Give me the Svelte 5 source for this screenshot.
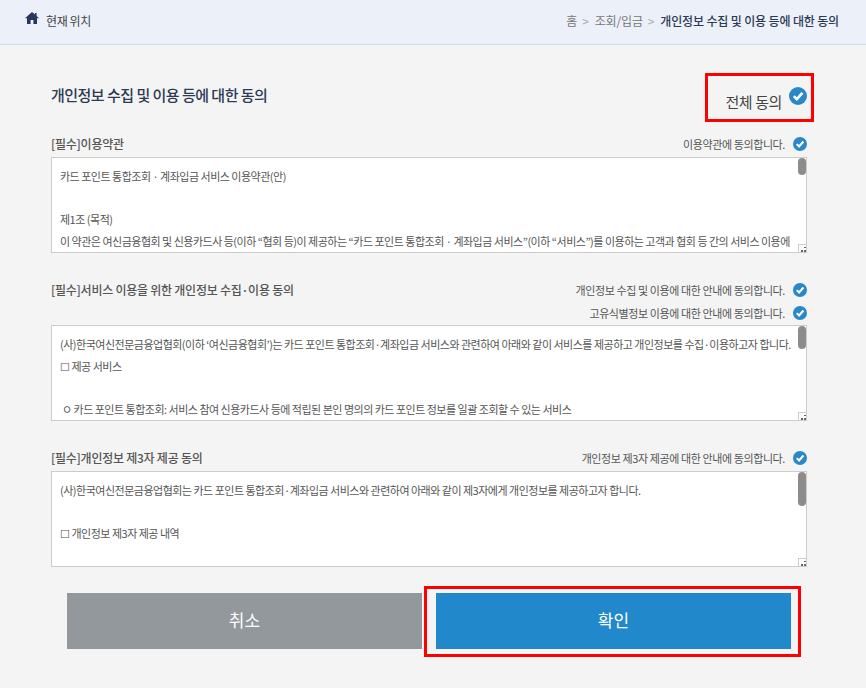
<script>
  const sections = [
    {
      title: '[필수]이용약관',
      checks: ['이용약관에 동의합니다.'],
      lines: [
        '카드 포인트 통합조회 · 계좌입금 서비스 이용약관(안)',
        '',
        '제1조 (목적)',
        '이 약관은 여신금융협회 및 신용카드사 등(이하 “협회 등)이 제공하는 “카드 포인트 통합조회 · 계좌입금 서비스”(이하 “서비스”)를 이용하는 고객과 협회 등 간의 서비스 이용에'
      ],
      thumb: 17
    },
    {
      title: '[필수]서비스 이용을 위한 개인정보 수집·이용 동의',
      checks: ['개인정보 수집 및 이용에 대한 안내에 동의합니다.', '고유식별정보 이용에 대한 안내에 동의합니다.'],
      lines: [
        '(사)한국여신전문금융업협회(이하 ‘여신금융협회’)는 카드 포인트 통합조회·계좌입금 서비스와 관련하여 아래와 같이 서비스를 제공하고 개인정보를 수집·이용하고자 합니다.',
        '☐ 제공 서비스',
        '',
        ' ㅇ 카드 포인트 통합조회: 서비스 참여 신용카드사 등에 적립된 본인 명의의 카드 포인트 정보를 일괄 조회할 수 있는 서비스'
      ],
      thumb: 23
    },
    {
      title: '[필수]개인정보 제3자 제공 동의',
      checks: ['개인정보 제3자 제공에 대한 안내에 동의합니다.'],
      lines: [
        '(사)한국여신전문금융업협회는 카드 포인트 통합조회·계좌입금 서비스와 관련하여 아래와 같이 제3자에게 개인정보를 제공하고자 합니다.',
        '',
        '☐ 개인정보 제3자 제공 내역'
      ],
      thumb: 34
    }
  ];
</script>

{#snippet checkIcon(size)}
  <svg class="check" width={size} height={size} viewBox="0 0 18 18" aria-hidden="true">
    <circle cx="9" cy="9" r="9" fill="#2a88c8" />
    <path d="M4.8 9.2l3 3L13.4 5.8" fill="none" stroke="#fff" stroke-width="2.6" />
  </svg>
{/snippet}

<header class="topbar">
  <div class="here">
    <svg width="14" height="12" viewBox="0 0 14 12" aria-hidden="true">
      <path d="M7 0L0 6.2h2V12h3.6V8h2.8v4H12V6.2h2L11.6 4V1H10v1.6z" fill="#27375f" />
    </svg>
    <span>현재 위치</span>
  </div>
  <nav class="crumbs">
    <span>홈</span><i>&gt;</i><span>조회/입금</span><i>&gt;</i><b>개인정보 수집 및 이용 등에 대한 동의</b>
  </nav>
</header>

<main class="page">
  <div class="head">
    <h1>개인정보 수집 및 이용 등에 대한 동의</h1>
    <div class="all">
      <span>전체 동의</span>
      {@render checkIcon(18)}
    </div>
  </div>

  {#each sections as s}
    <section>
      <div class="sec-head">
        <h2>{s.title}</h2>
        <div class="checks">
          {#each s.checks as c}
            <label>{c}{@render checkIcon(14)}</label>
          {/each}
        </div>
      </div>
      <div class="box">
        {#each s.lines as line}
          <p>{line || '\u00a0'}</p>
        {/each}
        <span class="thumb" style="height: {s.thumb}px"></span>
        <span class="grip">
          <svg width="5" height="5" viewBox="0 0 5 5" aria-hidden="true">
            <path d="M3 0h2v1H3zM3 3h2v2H3zM0 3h2v2H0z" fill="#666" />
          </svg>
        </span>
      </div>
    </section>
  {/each}

  <div class="actions">
    <div class="slot"><button class="cancel">취소</button></div>
    <div class="slot marked"><button class="ok">확인</button></div>
  </div>
</main>

<style>
  :global(body) {
    background: #f4f4f4;
    font-family: "Noto Sans CJK KR", "Noto Sans", sans-serif;
    color: #444;
  }

  .topbar {
    height: 44px;
    background: #ebf0f9;
    border-bottom: 1px solid #cbdfe6;
    display: flex;
    justify-content: space-between;
    align-items: center;
    padding: 0 27px 0 25px;
    font-size: 12px;
    letter-spacing: -0.4px;
  }

  .here {
    display: flex;
    align-items: center;
    gap: 7px;
    color: #444;
    margin-top: -4px;
  }

  .here svg {
    margin-top: -4px;
  }

  .crumbs {
    display: flex;
    align-items: center;
    color: #777;
    margin-top: -4px;
    letter-spacing: -0.15px;
  }

  .crumbs i {
    font-style: normal;
    color: #aaa;
    margin: 0 6px 0 5px;
  }

  .crumbs b {
    color: #2b3a55;
    font-weight: 500;
  }

  .page {
    padding: 28px 59px 0 51px;
  }

  .head {
    display: flex;
    justify-content: space-between;
    height: 62px;
    position: relative;
  }

  h1 {
    margin: 11px 0 0;
    font-size: 15px;
    font-weight: 500;
    color: #2b3a55;
    letter-spacing: -0.52px;
  }

  .all {
    position: absolute;
    right: -7px;
    top: 0;
    width: 109px;
    height: 49px;
    box-sizing: border-box;
    border: 3px solid #f00;
    font-size: 15px;
    display: flex;
    justify-content: flex-end;
    gap: 7px;
    padding: 11px 4px 0 0;
    color: #444;
  }

  .all span {
    margin-top: 4px;
    letter-spacing: -0.4px;
  }

  section + section {
    margin-top: 28px;
  }

  .sec-head {
    display: flex;
    justify-content: space-between;
    align-items: flex-start;
    min-height: 19px;
    margin-bottom: 3px;
  }

  h2 {
    margin: 0;
    font-size: 12px;
    font-weight: 500;
    color: #555;
    letter-spacing: -0.25px;
    line-height: 18px;
  }

  .checks {
    display: flex;
    flex-direction: column;
    align-items: flex-end;
    gap: 5px;
  }

  label {
    display: flex;
    align-items: center;
    gap: 8px;
    font-size: 11px;
    letter-spacing: -0.4px;
    line-height: 18px;
    color: #555;
  }

  .box {
    position: relative;
    height: 96px;
    box-sizing: border-box;
    background: #fff;
    border: 1px solid #ccc;
    padding: 8px 8px 0;
    overflow: hidden;
    font-size: 11px;
    color: #555;
    letter-spacing: -0.5px;
  }

  .box p {
    margin: 0;
    line-height: 21.5px;
    white-space: pre;
  }

  .thumb {
    position: absolute;
    top: 0;
    right: 0;
    width: 8px;
    border-radius: 4px;
    background: #8c8c8c;
  }

  .grip {
    position: absolute;
    right: 0;
    bottom: 0;
    width: 7px;
    height: 7px;
    background: #fff;
    border-left: 1px solid #ccc;
    border-top: 1px solid #ccc;
    display: flex;
    align-items: flex-end;
    justify-content: flex-end;
  }

  .actions {
    display: flex;
    margin: 19px 0 0 16px;
    width: 750px;
  }

  .slot {
    flex: 0 0 355px;
    height: 71px;
    box-sizing: border-box;
    padding-top: 7px;
  }

  .slot.marked {
    flex: 0 0 377px;
    margin-left: 2px;
    border: 3px solid #f00;
    padding: 4px 7px 0 9px;
  }

  button {
    display: block;
    width: 355px;
    height: 56px;
    border: 0;
    padding: 0 0 3px;
    color: #fff;
    font: inherit;
    font-size: 17px;
  }

  .cancel {
    background: #93989c;
  }

  .ok {
    background: #2288cc;
  }
</style>
